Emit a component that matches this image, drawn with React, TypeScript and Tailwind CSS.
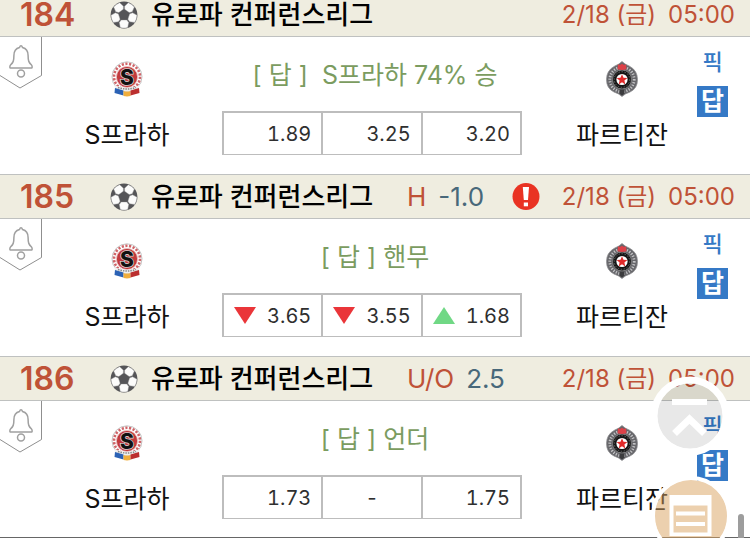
type Trend = 'up' | 'down';

interface Odd {
  value: string;
  trend?: Trend;
}

interface Match {
  no: number;
  league: string;
  rule?: string;
  line?: string;
  alert?: boolean;
  day: string;
  time: string;
  home: string;
  away: string;
  answer: string;
  odds: Odd[];
}

const matches: Match[] = [
  {
    no: 184,
    league: '유로파 컨퍼런스리그',
    day: '2/18 (금)',
    time: '05:00',
    home: 'S프라하',
    away: '파르티잔',
    answer: '[ 답 ]\u00a0 S프라하 74% 승',
    odds: [{ value: '1.89' }, { value: '3.25' }, { value: '3.20' }],
  },
  {
    no: 185,
    league: '유로파 컨퍼런스리그',
    rule: 'H',
    line: '-1.0',
    alert: true,
    day: '2/18 (금)',
    time: '05:00',
    home: 'S프라하',
    away: '파르티잔',
    answer: '[ 답 ] 핸무',
    odds: [
      { value: '3.65', trend: 'down' },
      { value: '3.55', trend: 'down' },
      { value: '1.68', trend: 'up' },
    ],
  },
  {
    no: 186,
    league: '유로파 컨퍼런스리그',
    rule: 'U/O',
    line: '2.5',
    day: '2/18 (금)',
    time: '05:00',
    home: 'S프라하',
    away: '파르티잔',
    answer: '[ 답 ] 언더',
    odds: [{ value: '1.73' }, { value: '-' }, { value: '1.75' }],
  },
];

// 흰 조각을 72도씩 돌려 축구공 무늬를 만든다
const SoccerBall = () => (
  <svg viewBox="0 0 28 28" className="h-7 w-7 shrink-0" aria-hidden="true">
    <circle cx="14" cy="14" r="13.4" fill="#555558" />
    {[0, 72, 144, 216, 288].map((deg) => (
      <path
        key={deg}
        transform={`rotate(${deg} 14 14)`}
        d="M11.200 19h5.600l1.900 2.500-1 5q-3.700 1-7.400 0l-1-5z"
        fill="#fcfcfb"
        stroke="#a0a0a0"
        strokeWidth="0.400"
      />
    ))}
    <path d="M14 8.700l5 3.600-1.900 6h-6.200l-1.900-6z" fill="#555558" />
  </svg>
);

const AlertIcon = () => (
  <svg viewBox="0 0 28 28" className="h-7 w-7" role="img" aria-label="알림">
    <circle cx="14" cy="13.500" r="13.500" fill="#e93323" />
    <path d="M10.800 4h6.200l-1 13h-4.200z" fill="#fff" />
    <rect x="11.800" y="19.500" width="4.200" height="3.800" fill="#fff" />
  </svg>
);

const SpartaLogo = () => (
  <svg viewBox="0 0 32 36" className="h-9 w-8" role="img" aria-label="S프라하 로고">
    <circle cx="16" cy="15.800" r="15" fill="#fff" stroke="#b5b5b5" strokeWidth="0.800" />
    <circle
      cx="16"
      cy="15.800"
      r="13"
      fill="none"
      stroke="#cf6468"
      strokeWidth="2.600"
      strokeDasharray="2.200 1.500"
    />
    <circle cx="16" cy="16" r="10.600" fill="#c23a3c" stroke="#e9c5c5" strokeWidth="0.800" />
    <path d="M3 24q13 6 26 0l-2 5q-11 3.500-22 0z" fill="#f0f0f0" />
    <path d="M7 26.500q9 3 18 0" fill="none" stroke="#888" strokeWidth="1.500" strokeDasharray="1.500 1" />
    <text
      x="16"
      y="23.500"
      textAnchor="middle"
      fontFamily="Inter, sans-serif"
      fontWeight="800"
      fontSize="21"
      fill="#111"
      stroke="#d8d0d0"
      strokeWidth="1.500"
      paintOrder="stroke"
    >
      S
    </text>
    <path d="M4 27l8.500 2.500v5L3.500 32z" fill="#2b62b5" />
    <path d="M12.500 30q3.500 1 7 0v5q-3.500.8-7 0z" fill="#f0ae3c" />
    <path d="M19.500 29.500L28 27l.5 5-9 2.500z" fill="#bb2f2f" />
  </svg>
);

const PartizanLogo = () => (
  <svg viewBox="0 0 32 36" className="h-9 w-8" role="img" aria-label="파르티잔 로고">
    <path
      d="M16 .5Q19 3.500 23.500 5.200 31.500 9.500 31.500 18.500T24 31Q19 32.500 16 35.500 13 32.500 8 31 .5 27.500.5 18.500T8.500 5.200Q13 3.500 16 .5z"
      fill="#66666a"
      stroke="#8e8e90"
      strokeWidth="0.800"
    />
    <circle
      cx="16"
      cy="18.500"
      r="12.200"
      fill="none"
      stroke="#c4c4c6"
      strokeWidth="2.800"
      strokeDasharray="1.200 1.500"
    />
    <circle cx="16" cy="18.500" r="9.500" fill="#161616" stroke="#8a8a8c" strokeWidth="0.800" />
    <circle cx="16" cy="18.500" r="7.800" fill="none" stroke="#6c6c6c" strokeWidth="0.900" strokeDasharray="1.500 1.500" />
    <circle cx="16" cy="18.500" r="5.600" fill="#fff" />
    <path d="M16 13.200l1.500 3.600 3.900.3-3 2.500.9 3.800-3.300-2.100-3.300 2.100.9-3.800-3-2.500 3.900-.3z" fill="#e02b2b" />
    <path d="M12 3.300l2 .7 2-1.300 2 1.300 2-.7.500 5q-4.500 1.200-9 0z" fill="#dc4148" />
    <path d="M13.500 28.500h5v4L16 34.500l-2.500-2z" fill="#3c3c3e" />
  </svg>
);

const BellTag = () => (
  <button type="button" aria-label="경기 알림 설정" className="block h-[53px] w-[42px] self-start">
    <svg viewBox="0 0 42 53" className="block h-[53px] w-[42px]" fill="none" stroke="#a0a0a0">
      <path d="M41.500 0v38.500L20 51 0 38.500" stroke="#8f8f8f" strokeWidth="1" />
      <g strokeWidth="1.500">
        <path d="M19.500 10.500c.8-2.400 2.200-2.400 3 0 4 1 5.600 4 5.600 8 0 5.500.7 7 3.400 9.500.8.800.8 3 .3 3H10.200c-.5 0-.5-2.200.3-3 2.700-2.500 3.400-4 3.400-9.500 0-4 1.600-7 5.600-8z" />
        <circle cx="21" cy="36.500" r="3.500" />
      </g>
    </svg>
  </button>
);

const TrendMark = ({ trend }: { trend: Trend }) => (
  <svg viewBox="0 0 22 17" className="h-[17px] w-[22px]" role="img" aria-label={trend === 'up' ? '상승' : '하락'}>
    {trend === 'up' ? (
      <path d="M11 0l11 17H0z" fill="#70d885" />
    ) : (
      <path d="M0 0h22L11 17z" fill="#ea3539" />
    )}
  </svg>
);

const OddsTable = ({ odds }: { odds: Odd[] }) => (
  <table className="h-11 w-full table-fixed border-separate border-spacing-0 border-t-2 border-b border-l-2 border-[#bdbdbd] text-[#2f2f2f]">
    <tbody>
      <tr>
        {odds.map((odd, i) => (
          <td key={i} className="border-r-2 border-[#bdbdbd] p-0">
            <div
              className={`flex items-center px-2.5 text-xl leading-6 tabular-nums ${
                odd.value === '-' ? 'justify-center' : odd.trend ? 'justify-between' : 'justify-end'
              }`}
            >
              {odd.trend && <TrendMark trend={odd.trend} />}
              <span>{odd.value}</span>
            </div>
          </td>
        ))}
      </tr>
    </tbody>
  </table>
);

const MatchItem = ({ match }: { match: Match }) => (
  <li className="flex h-[182px] flex-col border-[#666] last:border-b">
    {/* 경기 정보 */}
    <div className="flex h-[45px] shrink-0 items-center border-y border-[#bfc1c0] bg-[#efede0] pr-[15px] pl-5 text-[#bf5237]">
      <span className="w-[90px] text-[32px] leading-7 font-semibold">{match.no}</span>
      <SoccerBall />
      <h2 className="w-[269px] pl-[13px] text-[26px] leading-8 font-medium whitespace-nowrap text-black">
        {match.league}
      </h2>
      <div className="flex w-[105px] gap-3 text-[26px] leading-8 whitespace-nowrap">
        <span>{match.rule}</span>
        <span className="text-[#48687a]">{match.line}</span>
      </div>
      {match.alert && <AlertIcon />}
      <div className="ml-auto flex gap-3 text-2xl leading-8 whitespace-nowrap">
        <span>{match.day}</span>
        <span>{match.time}</span>
      </div>
    </div>

    {/* 팀 / 배당 */}
    <div className="grid flex-1 grid-cols-[42px_180fr_300fr_168fr_60px] bg-white">
      <BellTag />
      <div className="flex flex-col items-center gap-[22px] pt-6 pr-2.5">
        <SpartaLogo />
        <span className="text-[25px] leading-8 whitespace-nowrap">{match.home}</span>
      </div>
      <div className="flex flex-col gap-5 pt-[22px]">
        <p className="pl-1.5 text-center text-[25px] leading-8 whitespace-nowrap text-[#7b9c60]">{match.answer}</p>
        <OddsTable odds={match.odds} />
      </div>
      <div className="flex flex-col items-center gap-[22px] pt-6 pl-8">
        <PartizanLogo />
        <span className="text-[25px] leading-8 whitespace-nowrap">{match.away}</span>
      </div>
      <div className="flex flex-col items-center gap-3 pt-[13px] pr-[15px]">
        <button type="button" className="text-[22px] leading-6 font-medium text-[#3579c6]">
          픽
        </button>
        <button type="button" className="h-[31px] w-[31px] bg-[#3579c6] text-[25px] leading-[31px] font-bold text-white">
          답
        </button>
      </div>
    </div>
  </li>
);

const App = () => {
  return (
    <main className="relative h-screen overflow-hidden bg-white font-['Inter','Noto_Sans_CJK_KR',sans-serif] text-[#111]">
      <ul className="-mt-2">
        {matches.map((match) => (
          <MatchItem key={match.no} match={match} />
        ))}
      </ul>

      {/* 플로팅 버튼 */}
      <button type="button" aria-label="맨 위로" className="absolute right-5 bottom-[82px] h-20 w-20">
        <svg viewBox="0 0 80 80" className="h-full w-full" fill="none" stroke="#fff">
          <circle cx="40" cy="40" r="33" fill="#000" fillOpacity="0.09" stroke="none" />
          <circle cx="40" cy="40" r="36" strokeWidth="7" />
          <path d="M22 26h35" strokeWidth="6" />
          <path d="M24.500 57.500l15-14.500 15 14.500" strokeWidth="7" />
        </svg>
      </button>
      <button type="button" aria-label="목록" className="absolute right-[19px] -bottom-[18px] h-20 w-20">
        <svg viewBox="0 0 80 80" className="h-full w-full" fill="none">
          <circle cx="40" cy="40" r="36.500" fill="#d9a15d" fillOpacity="0.5" />
          <circle cx="40" cy="40" r="38" stroke="#fff" strokeWidth="4" />
          <path d="M18.500 19h42v41h-42zM22.500 29.500v27h34v-27z" fill="#fff" fillRule="evenodd" />
          <path d="M25 37.500h29M25 48h29" stroke="#fff" strokeWidth="4" />
        </svg>
      </button>
      <div className="absolute right-1.5 -bottom-2 h-8 w-1.5 rounded-full bg-[#9d9d9d]" />
    </main>
  );
};

export default App;
